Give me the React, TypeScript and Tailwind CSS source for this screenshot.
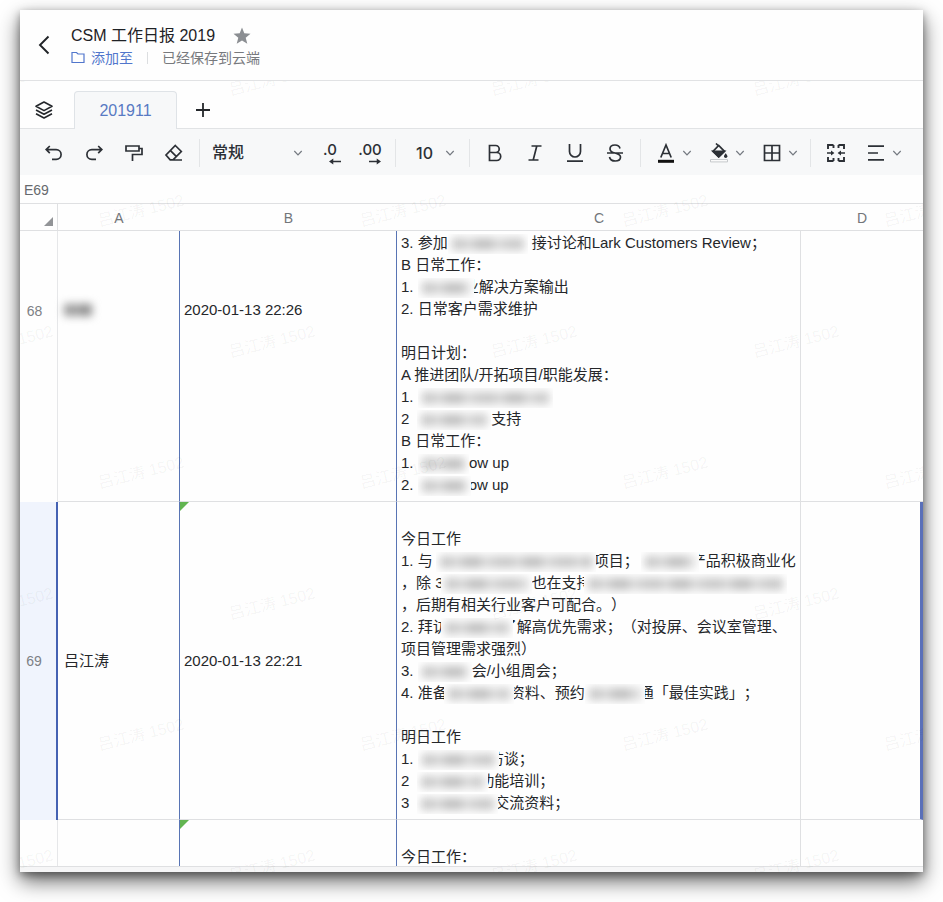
import type { ReactNode } from "react";

type Smudge = { width: number; left?: number; right?: number };
type Segment = string | Smudge;

const row68: Segment[][] = [
  ["3. 参加", { width: 84, right: -4 }, "接讨论和Lark Customers Review；"],
  ["B 日常工作："],
  ["1. ", { width: 46, right: 10 }, "业解决方案输出"],
  ["2. 日常客户需求维护"],
  [],
  ["明日计划："],
  ["A 推进团队/开拓项目/职能发展："],
  ["1. ", { width: 135 }],
  ["2", { width: 82, left: -8 }, "支持"],
  ["B 日常工作："],
  ["1. ", { width: 48, right: 3 }, "low up"],
  ["2. ", { width: 51, right: 2 }, "ow up"],
];

const row69: Segment[][] = [
  [],
  ["今日工作"],
  ["1. 与", { width: 161, left: -3, right: 2 }, "项目；", { width: 52, left: -2, right: 8 }, "产品积极商业化"],
  ["，除 3", { width: 88, left: 3 }, "也在支持", { width: 195, left: 8 }],
  ["，后期有相关行业客户可配合。）"],
  ["2. 拜访", { width: 54, left: 7, right: 11 }, "了解高优先需求；（对投屏、会议室管理、"],
  ["项目管理需求强烈）"],
  ["3. ", { width: 54 }, "会/小组周会；"],
  ["4. 准备", { width: 62, left: 4, right: 4 }, "资料、预约", { width: 54, right: 6 }, "通「最佳实践」；"],
  [],
  ["明日工作"],
  ["1. ", { width: 71, right: 10 }, "访谈；"],
  ["2", { width: 70, left: -8, right: 9 }, "功能培训；"],
  ["3", { width: 85, left: -8, right: 4 }, "交流资料；"],
];

const row70: Segment[][] = [[], ["今日工作："]];

function Blur({ width, left = 0, right = 0 }: Smudge) {
  return (
    <span aria-hidden="true" className="relative inline-block h-4 align-middle" style={{ width }}>
      <span className="absolute -inset-y-0.5 overflow-hidden bg-[#fefefe]" style={{ left: -left, right: -right }}>
        <span className="absolute inset-x-1 inset-y-1 bg-[repeating-linear-gradient(90deg,#c8c8c8_0_10px,#d6d6d6_14px_20px,#c0c0c0_25px_39px,#dadada_44px_49px,#cccccc_53px_61px)] blur-[4px]" />
      </span>
    </span>
  );
}

function Lines({ lines }: { lines: Segment[][] }) {
  return (
    <>
      {lines.map((line, i) => (
        <div key={i} className="h-[22px] whitespace-pre [text-spacing-trim:space-all]">
          {line.map((part, j) => (typeof part === "string" ? <span key={j}>{part}</span> : <Blur key={j} {...part} />))}
        </div>
      ))}
    </>
  );
}

function Icon({ children }: { children: ReactNode }) {
  return (
    <svg
      aria-hidden="true"
      width="20"
      height="20"
      viewBox="0 0 20 20"
      fill="none"
      stroke="currentColor"
      strokeWidth="1.7"
      className="shrink-0"
    >
      {children}
    </svg>
  );
}

function Chevron() {
  return (
    <svg aria-hidden="true" width="10" height="10" viewBox="0 0 10 10" fill="none" stroke="#747980" strokeWidth="1.2" className="pointer-events-none shrink-0">
      <path d="M1.3 3 5 6.8 8.7 3" />
    </svg>
  );
}

function Tool({ label, menu = false, children }: { label: string; menu?: boolean; children: ReactNode }) {
  return (
    <button
      type="button"
      aria-label={label}
      aria-haspopup={menu ? "menu" : undefined}
      className={menu ? "flex h-8 w-[53px] shrink-0 items-center gap-1.5 pl-2.5" : "flex h-8 w-10 shrink-0 items-center justify-center"}
    >
      {children}
      {menu && <Chevron />}
    </button>
  );
}

function Divider() {
  return <div className="mx-[5px] h-7 w-px shrink-0 bg-[#e3e5e7]" />;
}

function Toolbar() {
  return (
    <div role="toolbar" aria-label="格式" className="flex h-[46px] items-center overflow-hidden bg-[#f7f8f9] pt-0.5 pl-[14px] text-[#2c3036]">
      <Tool label="撤销">
        <Icon><path d="M5.8 3 2.2 6.6l3.6 3.6M2.5 6.6h9.7a4.9 4.9 0 0 1 0 9.8H8" /></Icon>
      </Tool>
      <Tool label="重做">
        <Icon><path d="m14.2 3 3.6 3.6-3.6 3.6M17.5 6.6H7.8a4.9 4.9 0 0 0 0 9.8H12" /></Icon>
      </Tool>
      <Tool label="格式刷">
        <Icon><path d="M2 3h13v5H2zM15 5.5h3v6H8.500v6.500" /></Icon>
      </Tool>
      <Tool label="清除格式">
        <Icon><path d="m11.300 2.500 6 6-8.300 8.300H6.200L2 12zM6.200 7.300l6.300 6.300M8 17h10" /></Icon>
      </Tool>
      <Divider />
      <div className="relative flex h-8 w-[105px] shrink-0 items-center">
        <select aria-label="数字格式" className="h-8 w-full appearance-none bg-transparent pl-[7px] text-base font-medium outline-none">
          <option>常规</option>
        </select>
        <span className="pointer-events-none absolute right-[7px]"><Chevron /></span>
      </div>
      <Tool label="减少小数位">
        <span className="flex flex-col items-center font-['Inter','Noto_Sans_CJK_SC',sans-serif] text-[15px] leading-4 font-medium">
          .0
          <svg aria-hidden="true" width="12" height="7" viewBox="0 0 14 7" className="ml-2.5" fill="currentColor"><path d="M0 3.500 5 0v2.700h9v1.700H5V7z" /></svg>
        </span>
      </Tool>
      <Tool label="增加小数位">
        <span className="flex flex-col items-center font-['Inter','Noto_Sans_CJK_SC',sans-serif] text-[15px] leading-4 font-medium">
          .00
          <svg aria-hidden="true" width="12" height="7" viewBox="0 0 14 7" className="ml-2.5" fill="currentColor"><path d="M14 3.500 9 0v2.700H0v1.700h9V7z" /></svg>
        </span>
      </Tool>
      <Divider />
      <div className="relative flex h-8 w-[63px] shrink-0 items-center">
        <select aria-label="字号" className="h-8 w-full appearance-none bg-transparent pl-[15px] font-['Inter','Noto_Sans_CJK_SC',sans-serif] text-base font-medium outline-none">
          <option>10</option>
        </select>
        <span className="pointer-events-none absolute right-[9px]"><Chevron /></span>
      </div>
      <Divider />
      <Tool label="加粗">
        <Icon><path d="M4.500 2.500h6.200a3.500 3.500 0 0 1 0 7H4.500zM4.500 9.500h7.200a4 4 0 0 1 0 8H4.500z" /></Icon>
      </Tool>
      <Tool label="斜体">
        <Icon><path d="M6.500 3h10M3.500 17h10M11.800 3 8.200 17" /></Icon>
      </Tool>
      <Tool label="下划线">
        <Icon><path d="M4.500 1v7.500a5.500 5.500 0 0 0 11 0V1M2 18.200h16" /></Icon>
      </Tool>
      <Tool label="删除线">
        <Icon><path d="M15 5.500C14.500 3.500 12.500 2 10 2c-2.800 0-5 1.500-5 3.900 0 2.400 2 3.300 5 4.100 3.300.8 5.500 1.700 5.500 4 0 2.400-2.200 4-5.300 4-3 0-5.200-1.500-5.700-4M2 10h16" /></Icon>
      </Tool>
      <Divider />
      <Tool label="字体颜色" menu>
        <Icon><path d="M4.800 14.500 10 2l5.200 12.500M6.500 10.500h7" /><path d="M2 18.300h16" stroke="#111" strokeWidth="3" /></Icon>
      </Tool>
      <Tool label="填充颜色" menu>
        <Icon>
          <path d="M7 .5 9.500 3M4 8.300 9.700 2.500l5.700 5.800-5.700 5.500z" />
          <path d="M4 8.300h11.400l-5.700 5.500z" fill="currentColor" />
          <path d="M16.700 10.300s-1.700 2-1.700 3a1.700 1.700 0 0 0 3.400 0c0-1-1.700-3-1.700-3z" fill="currentColor" stroke="none" />
          <path d="M1.500 16.600h17v2.300h-17z" fill="#fff" stroke="#c4c7ca" strokeWidth="1" />
        </Icon>
      </Tool>
      <Tool label="边框" menu>
        <Icon><path d="M2.500 2.500h15v15h-15zM10 2.500v15M2.500 10h15" /></Icon>
      </Tool>
      <Divider />
      <Tool label="合并单元格">
        <Icon>
          <path strokeWidth="1.9" d="M7.500 2H2v4M12.500 2H18v4M7.500 18H2v-4M12.500 18H18v-4M7.500 2v3M12.500 2v3M7.500 18v-3M12.500 18v-3" />
          <path strokeWidth="1.5" d="M1 10h5M19 10h-5" />
          <path d="m5 7.500 3.400 2.500L5 12.500zM15 7.500 11.600 10l3.400 2.500z" fill="currentColor" stroke="none" />
        </Icon>
      </Tool>
      <Tool label="对齐" menu>
        <Icon><path d="M2 3.200h16M2 10h10M2 16.800h16" /></Icon>
      </Tool>
    </div>
  );
}

function Watermark() {
  const marks = Array.from({ length: 7 }, (_, row) =>
    Array.from({ length: 4 }, (_, col) => ({ left: col * 262 + (row % 2 ? 77 : -54), top: row * 131 - 11 })),
  ).flat();
  return (
    <div aria-hidden="true" className="pointer-events-none absolute inset-x-0 top-[71px] bottom-0 overflow-hidden">
      {marks.map((mark, i) => (
        <span key={i} className="absolute -rotate-[14deg] text-base leading-5 whitespace-nowrap text-black/5" style={mark}>
          吕江涛 1502
        </span>
      ))}
    </div>
  );
}

const rowHead = "border-r border-r-[#e6e7e9] p-0 text-sm font-normal text-[#7d8085]";
const blueEdge = "border-r border-r-[#5874b4]";
const gridEdge = "border-r border-r-[#dfe0e2]";
const rule = "border-b border-b-[#dfe0e2]";

function Marker() {
  return <span aria-hidden="true" className="absolute top-0 left-0 border-t-[9px] border-r-[9px] border-t-[#62b551] border-r-transparent" />;
}

function Sheet() {
  return (
    <table className="w-full table-fixed border-separate border-spacing-0 text-[15px] leading-[22px] text-[#25272a]">
      <colgroup>
        <col className="w-[38px]" />
        <col className="w-[122px]" />
        <col className="w-[217px]" />
        <col className="w-[404px]" />
        <col />
      </colgroup>
      <thead>
        <tr className="h-[27px] text-sm text-[#73767a]">
          <td className={`${gridEdge} ${rule} p-0`}>
            <span className="mt-2 mr-1 ml-auto block h-0 w-0 border-b-[9px] border-l-[9px] border-b-[#929497] border-l-transparent" />
          </td>
          {["A", "B", "C", "D"].map((name) => (
            <th key={name} scope="col" className={`${rule} p-0 pt-0.5 font-normal`}>{name}</th>
          ))}
        </tr>
      </thead>
      <tbody>
        <tr>
          <th scope="row" className={`${rowHead} pr-2 pb-28`}>68</th>
          <td className={`${blueEdge} ${rule} px-1.5 pt-0 pb-28`}>
            <span aria-hidden="true" className="block h-3 w-7 bg-[linear-gradient(90deg,#999_40%,#b4b4b4_50%,#8c8c8c_60%)] blur-[4px]" />
          </td>
          <td className={`${blueEdge} ${rule} px-1 pt-0 pb-28`}>2020-01-13 22:26</td>
          <td className={`${gridEdge} ${rule} px-1 pt-px pb-[5px]`}><Lines lines={row68} /></td>
          <td className={rule} />
        </tr>
        <tr>
          <th scope="row" className="border-r-2 border-r-[#4562b3] bg-[#f0f4fd] p-0 pr-2 text-sm font-normal text-[#7d8085]">69</th>
          <td className={`${blueEdge} ${rule} px-1.5 py-0`}>吕江涛</td>
          <td className={`${blueEdge} ${rule} relative px-1 py-0`}><Marker />2020-01-13 22:21</td>
          <td className={`${gridEdge} ${rule} px-1 pt-1 pb-[5px]`}><Lines lines={row69} /></td>
          <td className={`${rule} border-r-[3px] border-r-[#5a70b9]`} />
        </tr>
        <tr>
          <th scope="row" aria-label="70" className={rowHead} />
          <td className={`${blueEdge} p-0`} />
          <td className={`${blueEdge} relative p-0`}><Marker /></td>
          <td className={`${gridEdge} px-1 py-0`}>
            <div className="h-[46px] overflow-hidden pt-1"><Lines lines={row70} /></div>
          </td>
          <td />
        </tr>
      </tbody>
    </table>
  );
}

export default function App() {
  return (
    <div className="bg-white px-5 pt-2.5 pb-[30px] font-['Liberation_Sans','Noto_Sans_CJK_SC',sans-serif]">
      <main className="relative bg-[#fefefe] shadow-[0_9px_20px_rgba(0,0,0,0.6),0_3px_8px_rgba(0,0,0,0.35)]">
        <header className="flex h-[71px] items-center border-b border-[#e1e2e4] pl-3">
          <a href="#back" aria-label="返回" className="flex w-6 justify-center text-[#202327]">
            <svg aria-hidden="true" width="12" height="20" viewBox="0 0 12 20" fill="none" stroke="currentColor" strokeWidth="1.9"><path d="M10.500 1.500 2 10l8.500 8.500" /></svg>
          </a>
          <div className="ml-[15px] pt-px">
            <div className="flex h-6 items-center gap-[18px]">
              <h1 className="text-base leading-6 text-[#1f2226]">CSM 工作日报 2019</h1>
              <button type="button" aria-label="收藏">
                <svg aria-hidden="true" width="18" height="18" viewBox="0 0 18 18" fill="#8b8e92"><path d="m9 .5 2.300 5.800 6.200.4-4.800 4 1.600 6.100L9 13.400l-5.300 3.400 1.600-6.100-4.800-4 6.200-.4z" /></svg>
              </button>
            </div>
            <div className="flex h-5 items-center text-sm">
              <a href="#add" className="flex items-center gap-1.5 text-[#5176cc]">
                <svg aria-hidden="true" width="14" height="13" viewBox="0 0 14 13" fill="none" stroke="currentColor" strokeWidth="1.2"><path d="M1 1.500h4.500L7 3h6v8.500H1z" /></svg>
                添加至
              </a>
              <span className="mx-3.5 h-3 w-px bg-[#dcdee0]" />
              <span className="text-[#77797d]">已经保存到云端</span>
            </div>
          </div>
        </header>
        <nav aria-label="工作表" className="flex h-12 items-end border-b border-[#e1e3e5] pl-3">
          <button type="button" aria-label="全部工作表" className="flex h-9 w-6 items-center justify-center text-[#24272b]">
            <svg aria-hidden="true" width="20" height="20" viewBox="0 0 20 20" fill="none" stroke="currentColor" strokeWidth="1.6" strokeLinejoin="round"><path d="m10 2 8 4.300-8 4.300-8-4.300zM2 10l8 4.300 8-4.300M2 13.700 10 18l8-4.300" /></svg>
          </button>
          <button type="button" aria-current="page" className="-mb-px ml-[18px] h-[38px] w-[103px] rounded-t border border-b-0 border-[#dfe3e7] bg-[#f7f8f9] text-base text-[#587ac3]">
            201911
          </button>
          <button type="button" aria-label="添加工作表" className="ml-3 flex h-9 w-7 items-center justify-center text-[#24272b]">
            <svg aria-hidden="true" width="16" height="16" viewBox="0 0 16 16" fill="none" stroke="currentColor" strokeWidth="1.8"><path d="M8 1v14M1 8h14" /></svg>
          </button>
        </nav>
        <Toolbar />
        <div className="h-[29px] border-b border-[#dfe0e2] px-1">
          <input aria-label="名称框" defaultValue="E69" className="block h-7 w-full bg-transparent pt-0.5 text-sm text-[#66696d] outline-none" />
        </div>
        <Sheet />
        <div className="h-1.5 border-t border-[#dfe0e2] bg-[#f6f6f7]" />
        <Watermark />
      </main>
    </div>
  );
}
